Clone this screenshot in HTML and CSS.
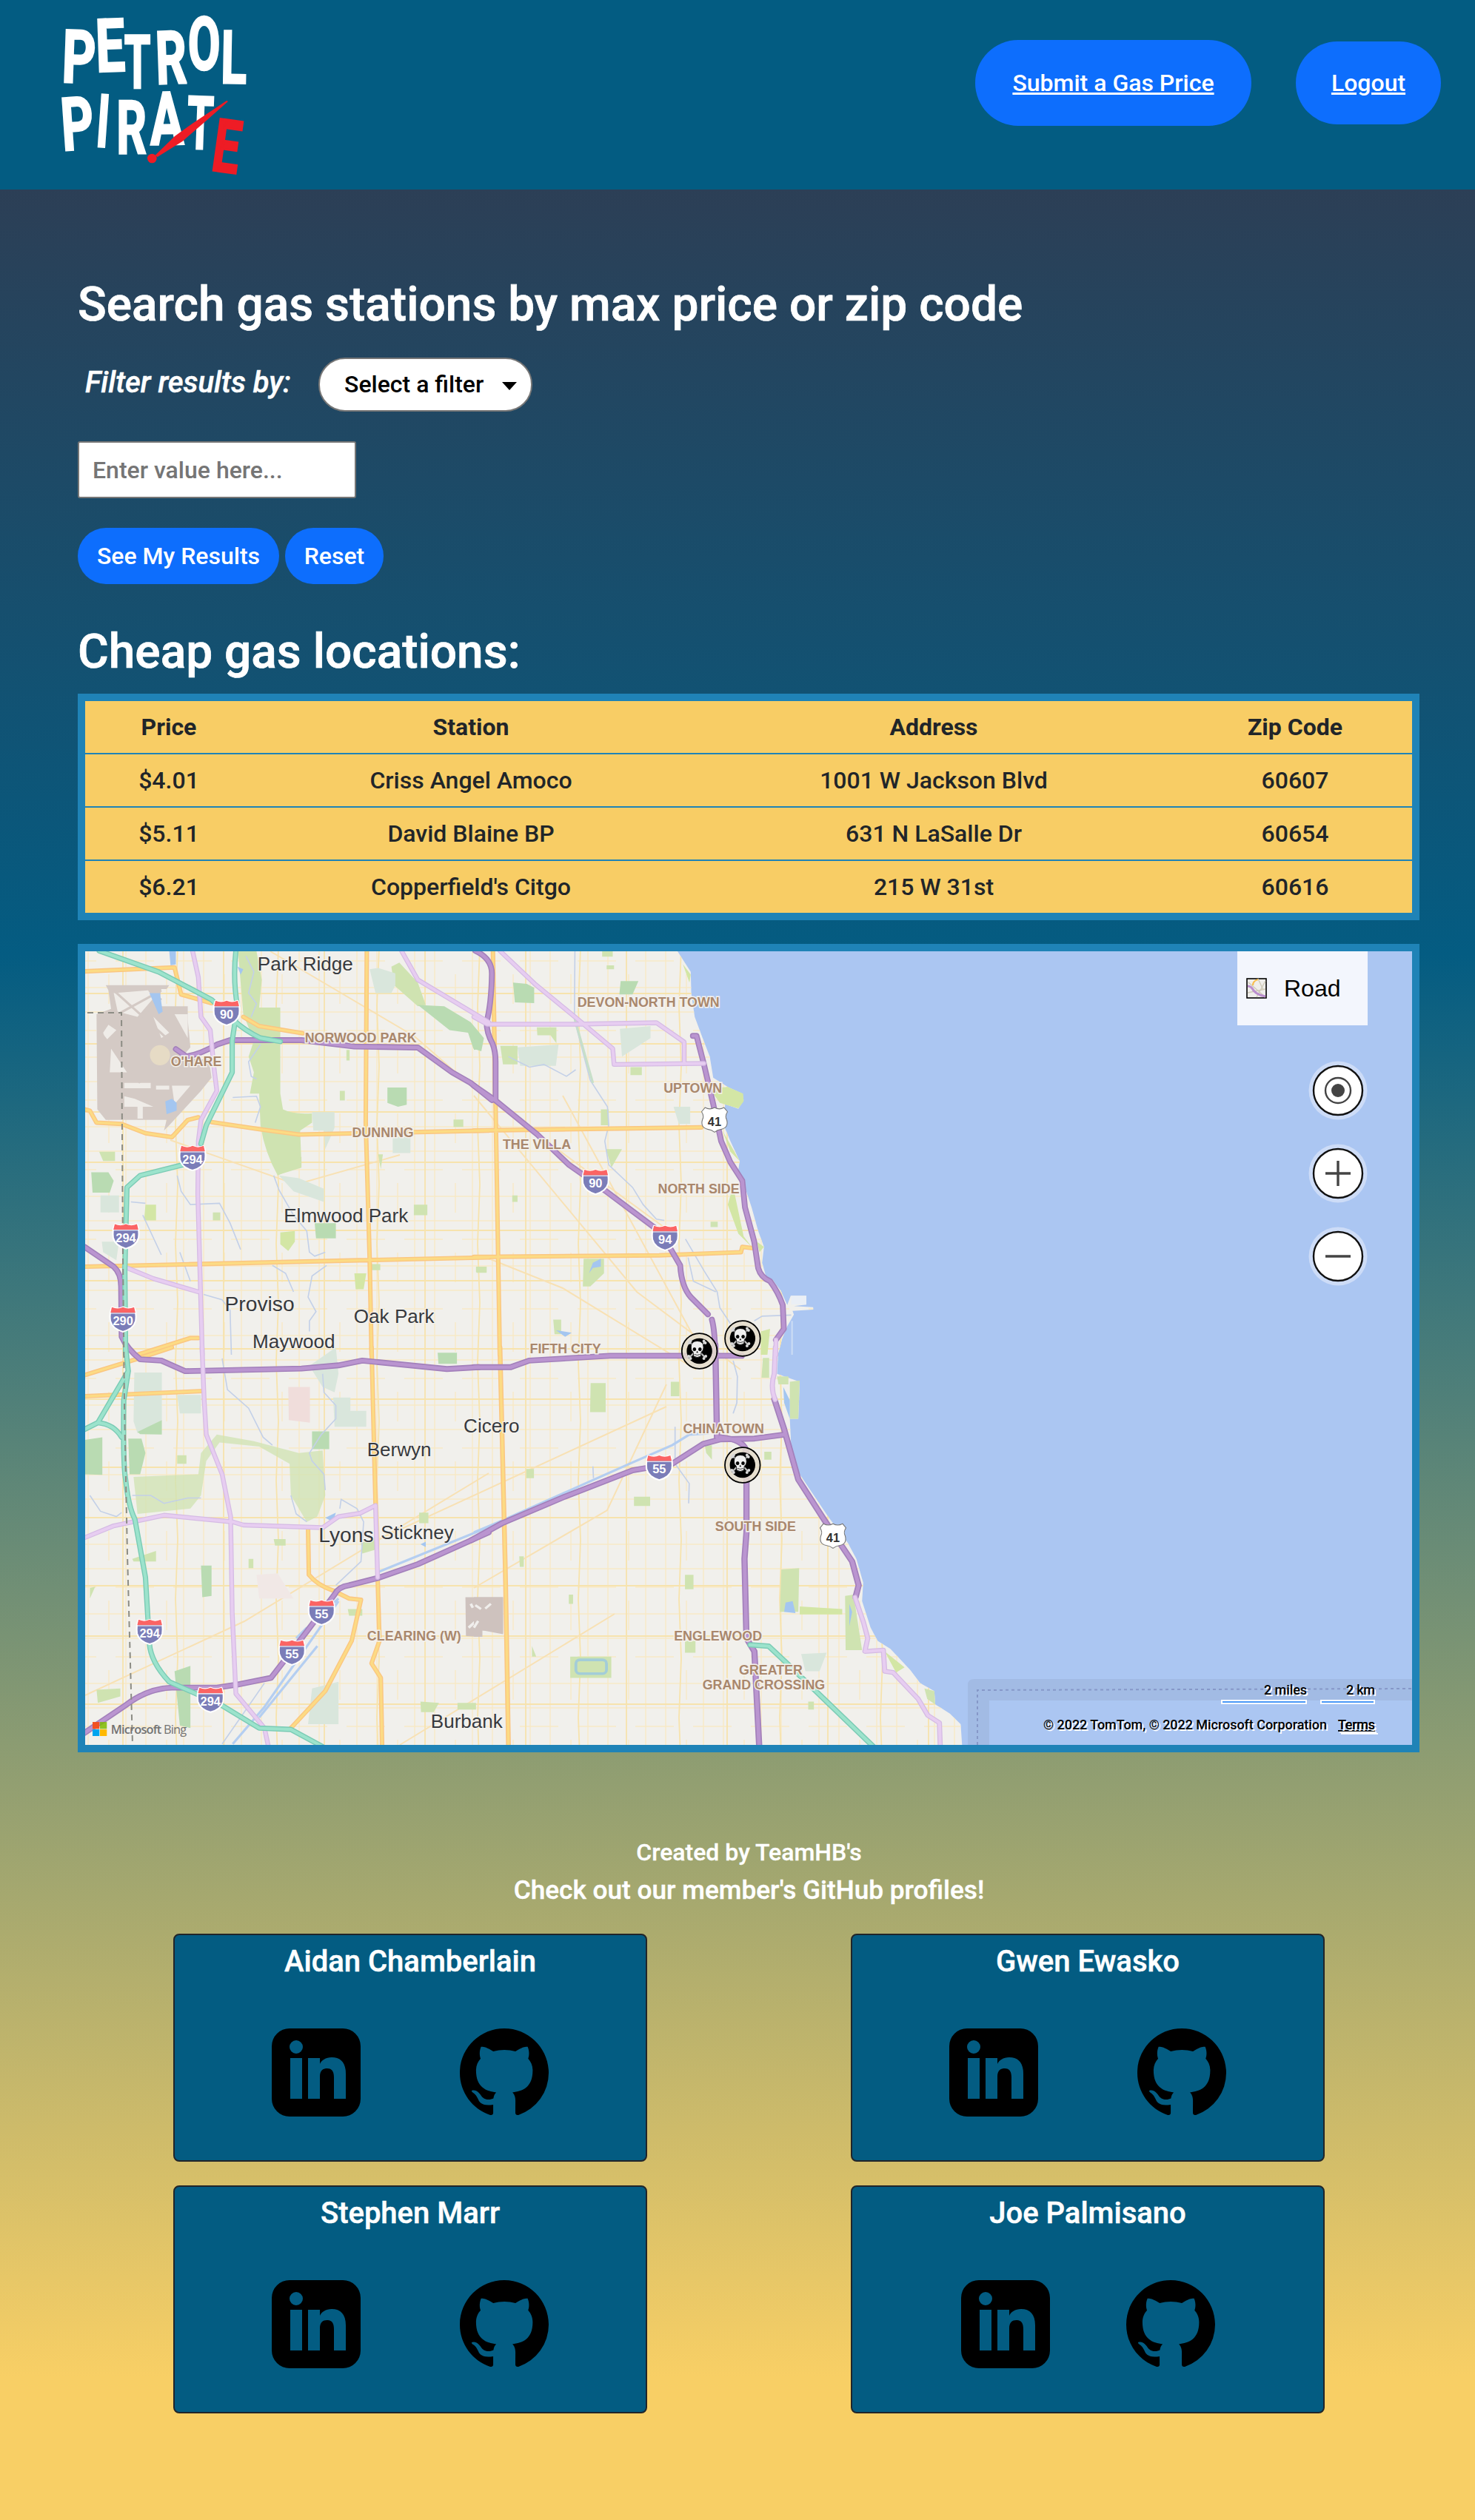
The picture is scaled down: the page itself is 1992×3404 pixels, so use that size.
FILE: index.html
```html
<!DOCTYPE html>
<html lang="en">
<head>
<meta charset="utf-8">
<title>Petrol Pirate</title>
<link rel="stylesheet" href="styles.css">
</head>
<body>
<svg class="sprite" aria-hidden="true">
  <symbol id="linkedin" viewBox="0 0 120 120">
    <path fill-rule="evenodd" d="M24 0H96A24 24 0 0 1 120 24V95A24 24 0 0 1 96 119H24A24 24 0 0 1 0 95V24A24 24 0 0 1 24 0ZM33 16A9 9 0 1 0 33 34A9 9 0 1 0 33 16ZM25 40V95H41V40ZM49 40V95H65V65C65 57 69 54 75 54C82 54 84 59 84 66V95H100V61C100 46 93 39 81 39C73 39 67 43 65 48V40Z"/>
  </symbol>
  <symbol id="github" viewBox="0 0 16 16">
    <path d="M8 0C3.58 0 0 3.58 0 8c0 3.54 2.29 6.53 5.47 7.59.4.07.55-.17.55-.38 0-.19-.01-.82-.01-1.49-2.01.37-2.53-.49-2.69-.94-.09-.23-.48-.94-.82-1.13-.28-.15-.68-.52-.01-.53.63-.01 1.08.58 1.23.82.72 1.21 1.87.87 2.33.66.07-.52.28-.87.51-1.07-1.78-.2-3.64-.89-3.64-3.95 0-.87.31-1.59.82-2.15-.08-.2-.36-1.02.08-2.12 0 0 .67-.21 2.2.82.64-.18 1.32-.27 2-.27.68 0 1.36.09 2 .27 1.53-1.04 2.2-.82 2.2-.82.44 1.1.16 1.92.08 2.12.51.56.82 1.27.82 2.15 0 3.07-1.87 3.75-3.65 3.95.29.25.54.73.54 1.48 0 1.07-.01 1.93-.01 2.2 0 .21.15.46.55.38A8.012 8.012 0 0 0 16 8c0-4.42-3.58-8-8-8z"/>
  </symbol>
</svg>

<header class="site-header">
  <svg class="logo" viewBox="0 0 1050 768" role="img" aria-label="Petrol Pirate">
    <g class="logo-letters">
      <text transform="translate(316 335) rotate(2) scale(.71 1)">P</text>
      <text transform="translate(450 289) rotate(-2) scale(.71 1)">E</text>
      <text transform="translate(557 356) scale(.58 1)">T</text>
      <text transform="translate(697 338) rotate(-2) scale(.66 1)">R</text>
      <text transform="translate(827 281) scale(.64 1)">O</text>
      <text transform="translate(946 337) rotate(1) scale(.65 1)">L</text>
      <text transform="translate(320 606) rotate(-4) scale(.69 1)">P</text>
      <text transform="translate(411 595) rotate(4) scale(.6 1)">I</text>
      <text transform="translate(533 622) scale(.64 1)">R</text>
      <text transform="translate(678 585) rotate(-1) scale(.68 1)">A</text>
      <text transform="translate(808 603) rotate(2) scale(.58 1)">T</text>
      <text class="logo-red" transform="translate(905 697) rotate(8) scale(.66 1)">E</text>
    </g>
    <path class="logo-red" d="M924 411L918 408L780 500L708 552L628 630L638 636L740 572L835 490Z"/>
    <circle class="logo-red" cx="616" cy="642" r="19"/>
  </svg>
  <nav class="site-nav">
    <a class="pill pill-submit" href="#submit">Submit a Gas Price</a>
    <a class="pill pill-logout" href="#logout">Logout</a>
  </nav>
</header>

<main class="content">
  <h1 class="title">Search gas stations by max price or zip code</h1>
  <div class="filter-row">
    <label class="filter-label" for="filter">Filter results by:</label>
    <div class="select-wrap">
      <select class="filter-select" id="filter"><option>Select a filter</option></select>
      <svg class="caret" viewBox="0 0 20 11"><path d="M0 0H20L10 11Z"/></svg>
    </div>
  </div>
  <input class="value-input" type="text" placeholder="Enter value here...">
  <div class="actions">
    <button class="btn btn-results">See My Results</button>
    <button class="btn btn-reset">Reset</button>
  </div>

  <h2 class="title title-table">Cheap gas locations:</h2>
  <table class="prices">
    <colgroup><col class="c-price"><col class="c-station"><col class="c-address"><col class="c-zip"></colgroup>
    <thead><tr><th>Price</th><th>Station</th><th>Address</th><th>Zip Code</th></tr></thead>
    <tbody>
      <tr><td>$4.01</td><td>Criss Angel Amoco</td><td>1001 W Jackson Blvd</td><td>60607</td></tr>
      <tr><td>$5.11</td><td>David Blaine BP</td><td>631 N LaSalle Dr</td><td>60654</td></tr>
      <tr><td>$6.21</td><td>Copperfield's Citgo</td><td>215 W 31st</td><td>60616</td></tr>
    </tbody>
  </table>

  <div class="map">
  <svg class="map-canvas" viewBox="115 1285 1792 1072">
    <defs>
      <pattern id="streets" width="78" height="94" patternUnits="userSpaceOnUse">
        <path d="M14 0V94M41 0V94M69 0V40M0 18H78M0 51H78M0 76H52" fill="none" stroke="#f8e9c6" stroke-width="1.4"/>
      </pattern>
      <pattern id="avenues" width="136" height="160" patternUnits="userSpaceOnUse">
        <path d="M30 0V160M104 0L101 80L104 160M0 62H136M0 130H136" fill="none" stroke="#f7e3ad" stroke-width="1.8"/>
      </pattern>
      <path id="land-north" transform="translate(640 1270) scale(.35714)" d="M-1520 20H760L770 42L820 120L822 200L835 290L865 370L892 440L905 520L960 555L1015 580L1020 605L1000 638L950 620L945 700L970 760L1005 835L1000 870L1020 920L1050 1010L1075 1100L1097 1160L1090 1220L1104 1270L1130 1285L1160 1325L1185 1380L1198 1345H1257V1378L1210 1384L1283 1388V1397L1205 1402L1210 1416L1185 1460L1165 1510L1152 1560H-1520Z"/>
      <path id="land-south" transform="translate(640 1820) scale(.38265 .35714)" d="M-1450 0H1075L1070 100L1150 130L1145 270H1115L1120 380L1150 480L1200 560L1250 640L1320 740L1350 800L1374 890L1370 960L1400 1060L1425 1110L1470 1140L1540 1220L1575 1270L1625 1300L1628 1350L1680 1385L1718 1425L1724 1520H-1450Z"/>
      <g id="freeways">
        <g transform="translate(100 1270) scale(.35714)">
          <path d="M40 1160L150 1235Q178 1260 178 1310L180 1500Q200 1545 250 1585L330 1590L420 1630L860 1620L1000 1608L1090 1590L1410 1622L1530 1615"/>
          <path d="M385 412L425 440Q480 430 540 395L590 378H860L1060 402L1300 406L1430 500L1500 540L1580 605"/>
        </g>
        <g transform="translate(640 1270) scale(.35714)">
          <path d="M0 550L80 605L240 735L360 850L410 885L500 950L680 1085L745 1170L780 1230Q785 1310 820 1350L885 1415M900 1435Q912 1480 912 1568"/>
          <path d="M5 40Q70 70 68 130Q66 240 48 310Q48 350 70 390Q82 420 82 460V605"/>
          <path d="M828 362H842L870 470L905 620L935 760L970 840L1015 910L1025 1010L1060 1140L1075 1240Q1085 1275 1120 1290Q1150 1330 1168 1380L1172 1470L1142 1512"/>
        </g>
        <g transform="translate(640 1820) scale(.38265 .35714)">
          <path d="M0 75H130L195 50L480 32H945M852 -10L858 340"/>
          <path d="M-10 730L100 665L320 565L560 465L700 440L810 365L870 348L990 345L1095 330"/>
          <path d="M870 340Q960 350 962 400V700L955 800L962 1100L990 1150L1007 1510M1060 195L1095 310L1145 500L1235 650L1335 810L1358 900L1347 945"/>
        </g>
        <path transform="translate(100 1820) scale(.35714)" d="M1568 700L1300 820L1150 872L1040 900Q1000 905 985 935L880 1075L745 1250L620 1275L540 1287H370Q280 1290 200 1350L40 1458"/>
      </g>
      <g id="parkways">
        <path transform="translate(100 1270) scale(.35714)" d="M448 40L470 140L480 290L515 340L530 490L540 570L480 680L470 760L468 960L485 1568M190 1235L300 1280L470 1330M1238 40L1300 150L1568 310"/>
        <path transform="translate(640 1270) scale(.35714)" d="M0 290L50 318H380L690 312L795 385V465M98 40L230 165L400 305L525 410L530 470L870 466M1142 1512L1142 1568"/>
        <path transform="translate(100 1820) scale(.35714)" d="M484 0L492 200L500 330L560 480L592 640L598 1000L612 1310L720 1440L735 1510M40 720L150 675L340 635L600 660L640 672L940 682L1000 640L1080 628L1140 598L1148 870"/>
        <path transform="translate(640 1820) scale(.38265 .35714)" d="M1064 0L1060 100Q1045 150 1063 198M1345 945L1375 1040L1390 1100L1380 1150L1445 1145L1450 1225L1480 1230L1568 1330L1602 1392L1643 1420L1646 1510"/>
      </g>
      <g id="arterials">
        <path transform="translate(100 1270) scale(.35714)" d="M40 118L380 103L405 205L520 238M640 290L700 325L865 352M1107 40L1103 690L1118 1210L1125 1568M40 640L60 645L85 690L180 695L270 730L370 745L430 680L470 670M520 688L700 715L850 735L1568 720M40 1235L1110 1210L1568 1200M240 1568L440 1505L470 1505"/>
        <path transform="translate(640 1270) scale(.35714)" d="M0 720L860 708M72 40L98 1568M0 1198L700 1192L1010 1180L1015 1160L1055 1165"/>
        <path transform="translate(100 1820) scale(.35714)" d="M40 105L250 40L370 0M40 185L490 165M1125 0L1140 590M1148 870L1155 1110L1125 1195L1160 1250L1165 1510M885 690L888 860Q920 900 980 920L1040 950L1085 955L1050 1110L950 1300L820 1440"/>
        <path transform="translate(640 1820) scale(.38265 .35714)" d="M92 0L110 800L112 900L122 1510"/>
      </g>
      <g id="tollways">
        <path transform="translate(100 1270) scale(.35714)" d="M95 40L320 120L520 225L600 300Q650 345 705 370L780 383M612 40Q600 150 618 250L598 380V500L500 700L480 770M410 850L250 890L200 935L192 1250L195 1568"/>
        <path transform="translate(100 1820) scale(.35714)" d="M195 0L205 90L188 200Q185 450 195 500Q205 600 230 650L270 870L285 1120Q290 1190 360 1265L450 1305L560 1355L700 1440L820 1445L940 1510M205 90L140 200L90 285L40 310M90 285Q150 290 180 340"/>
        <path transform="translate(640 1820) scale(.38265 .35714)" d="M975 1125L1040 1130L1100 1190L1410 1510"/>
      </g>
      <symbol id="interstate" viewBox="-54 -52 108 104" overflow="visible">
        <path d="M-42 -46Q-20 -36 0 -46Q20 -36 42 -46Q52 -26 48 6Q40 36 0 47Q-40 36 -48 6Q-52 -26 -42 -46Z" fill="#7b7db8" stroke="#fff" stroke-width="6"/>
        <path d="M-42 -46Q-20 -36 0 -46Q20 -36 42 -46L47 -25H-47Z" fill="#fb6464"/>
        <path d="M-48 -23H48" stroke="#fff" stroke-width="3"/>
      </symbol>
      <symbol id="us-route" viewBox="-54 -52 108 104" overflow="visible">
        <path d="M-36 -46Q-18 -36 0 -46Q18 -36 36 -46L49 -30Q38 -14 46 0Q54 30 26 36Q10 38 0 47Q-10 38 -26 36Q-54 30 -46 0Q-38 -14 -49 -30Z" fill="#fff" stroke="#777" stroke-width="3"/>
      </symbol>
      <symbol id="pin" viewBox="-26 -26 52 52">
        <circle r="23.8" fill="#e4dccb" fill-opacity=".85" stroke="#000" stroke-width="1.8"/>
        <circle r="17.2" fill="#000"/>
        <g transform="translate(-3 -2)">
          <path d="M-10 -10L10 10M10 -10L-10 10" stroke="#bbb" stroke-width="2.4" stroke-linecap="round"/>
          <g fill="#d8d8d8"><circle cx="-11" cy="-9" r="1.9"/><circle cx="-9" cy="-11.500" r="1.9"/><circle cx="9" cy="-11.500" r="1.9"/><circle cx="11" cy="-9" r="1.9"/><circle cx="-11.500" cy="9" r="2"/><circle cx="-9" cy="12" r="2"/><circle cx="11.500" cy="9" r="2"/><circle cx="9" cy="12" r="2"/></g>
          <path d="M-8.500 -3Q-8.500 -11.500 0 -11.500Q8.500 -11.500 8.500 -3Q8.500 1.500 5.500 3.500L4.800 9Q0 12 -4.800 9L-5.500 3.500Q-8.500 1.500 -8.500 -3Z" fill="#efefef" stroke="#000" stroke-width=".8"/>
          <ellipse cx="-3.700" cy="-.6" rx="2.300" ry="2.500"/><ellipse cx="3.700" cy="-.6" rx="2.300" ry="2.500"/>
          <path d="M0 1.800L-1.300 4.200H1.300Z"/><path d="M-3.600 6.700Q0 8.400 3.600 6.700" fill="none" stroke="#222" stroke-width=".9"/>
        </g>
      </symbol>
      <clipPath id="land-clip"><use href="#land-north"/><use href="#land-south"/></clipPath>
    </defs>

    <rect class="lake" x="115" y="1285" width="1792" height="1072"/>
    <path d="M1307 2357V2276Q1307 2268 1316 2268H1907V2297H1336V2357Z" fill="#a2bbe4"/>
    <path d="M1320 2357V2283L1907 2281" class="boundary"/>
    <g class="land"><use href="#land-north"/><use href="#land-south"/></g>

    <g class="soft">
    <g clip-path="url(#land-clip)">
      <rect x="115" y="1285" width="1200" height="1072" fill="url(#streets)"/>
      <rect x="115" y="1285" width="1200" height="1072" fill="url(#avenues)"/>
      <path class="lane" d="M365 1285L560 1400L640 1470L900 1660M640 1480L860 1745L1000 1850M760 1480L950 1830M230 1540L400 1600L540 1560M510 2080L900 1900M115 2290L330 2190L660 1990M640 2145L820 2040L900 1870M540 2357L830 2180M660 1700L760 1740L940 1850"/>
    </g>

    <g transform="translate(100 1270) scale(.35714)">
      <path class="park" d="M620 42H690L710 150L700 255H780V580L790 640Q830 660 900 655V690L855 720L860 850L770 890Q720 800 705 700L700 580H665L680 500L660 440L680 380L640 280Z"/>
      <path class="park" d="M1200 100L1230 85L1300 160L1330 245L1300 250L1210 170Z"/>
      <path class="wood" d="M1300 245L1400 250L1500 310L1550 370L1540 420L1510 410L1490 350L1420 340Z"/>
      <path class="wood" d="M1185 557H1258V622L1225 630L1185 615ZM65 878H130L150 910L135 955H70ZM910 1070H990V1128H915Z"/>
      <path class="park" d="M780 840L860 820V860L770 888ZM1285 1000H1336V1040H1285ZM1435 678H1472V706H1435ZM525 1030H553V1060H525ZM1120 1225H1158V1248H1120ZM1520 1235H1560V1256H1520ZM1030 415H1042V455H1030ZM1150 810H1168L1160 865ZM1005 570H1024V606H1005ZM95 800H155V835H110Z"/>
      <path class="green" d="M900 650H985V710L950 790L945 720H905ZM775 890L850 900L945 940V990L830 950ZM1118 110L1150 105L1215 125V170L1200 200H1140ZM1205 745H1272V805H1205ZM100 965H170V1030H100ZM105 1140H170L160 1210L110 1180Z"/>
      <path class="lime" d="M780 1105L835 1100V1140L810 1175L780 1150ZM1060 1260H1105L1095 1320H1065ZM270 1000H310V1060H265Z"/>
      <path class="airport" d="M120 170H360L350 185H330L320 250H430V300L440 405L410 440L470 450H510L520 520L480 570L360 700L340 720L350 680H120L88 640L85 280L140 260L130 190Z"/>
      <path class="apron" d="M150 200L280 190L300 220L240 290L165 270ZM140 410L200 500H135ZM110 350L130 320L160 340L120 380ZM190 540H290V560H190ZM310 550H360V565H310ZM190 590L230 600L300 630H260V675H240V630H190ZM370 550H440L380 620ZM300 290L360 350L330 370ZM380 280H430V370Z"/>
      <path class="runway" d="M150 190L350 370M175 275L330 190M100 350L250 540M190 350L330 220"/>
      <circle cx="325" cy="435" r="38" fill="#e6dbc5"/>
      <path class="pond" d="M285 200H325L335 270L320 280ZM345 610L370 600L388 615V645L350 658ZM360 42H385V92L365 95ZM618 100L640 110L630 130Z"/>
      <path class="river" d="M650 60L680 120L660 200L690 240L670 290M705 395L660 460L670 515L690 525M600 595L690 590L705 630L685 690M755 890L775 945L830 1040L880 1100L890 1180L910 1195L950 1180M955 1230L900 1270L885 1350L915 1405L890 1440V1480M390 890L405 950L440 1000L550 995L590 1070L630 1170M260 1040L330 1190M215 990L270 995M750 1230L800 1260L830 1330M400 1180L440 1290M490 1340L560 1360L590 1400L595 1568"/>
    </g>
    <g transform="translate(640 1270) scale(.35714)">
      <path class="wood" d="M148 160L200 165L228 180V238L155 235ZM555 155H622L600 205H550ZM0 340L25 380V410L0 415Z"/>
      <path class="park" d="M238 330H312V390L290 360H240ZM100 400H165V470H110ZM415 1205H492V1260L440 1310H412ZM485 42H525V62H485ZM502 95H530V110H502ZM592 480H635V510H592ZM895 1065H922V1085H895ZM10 1235H48V1258H10ZM300 1435H330V1490H305ZM480 640H510V700H480ZM500 790H560L520 860ZM145 965H165V990H145Z"/>
      <path class="green" d="M165 405L320 395L310 475H175ZM552 335L668 325V370L560 440ZM755 630H818V695H775Z"/>
      <path class="lime" d="M890 560L960 555L1018 580L1020 610L1000 636L930 615ZM940 720L1005 835L970 800ZM790 90L820 130L815 160ZM980 930L1020 1120L1050 1160L1000 1110L960 1000ZM1070 1140L1097 1160L1080 1180ZM1085 1480L1120 1470L1110 1568H1085Z"/>
      <path class="river" d="M382 42L380 300L440 530L505 630L510 700L495 760L510 850L600 935L640 1000L690 1055L720 1060M130 440L210 480L265 470L350 515L385 490M800 1130L870 1250L920 1330L930 1390L970 1450M810 1200L830 1290L915 1330M1060 1440L1090 1422L1200 1418"/>
      <path class="canal greenway" d="M382 300L430 470L450 540"/>
      <path class="pond" d="M435 1260L450 1220L480 1205V1235L450 1240ZM310 1475L370 1485L345 1500Z"/>
      <path d="M1200 1345H1257V1378H1200Z" fill="#eaeff6"/>
      <path d="M1203 1440V1568" stroke="#cbdcf4" stroke-width="6"/>
    </g>
    <g transform="translate(100 1820) scale(.35714)">
      <path class="green" d="M228 95H332V275L240 325L225 280ZM890 70L990 0L1000 100L985 170L940 150ZM390 180H480V250H400ZM980 190H1045V240H1105V300H985ZM900 1290L1000 1265V1425H885Z"/>
      <path class="wood" d="M240 320L332 275V330L250 328ZM40 350L107 340V482L42 480ZM205 345H255L270 400L250 480H210ZM900 318H965V385H900ZM1375 20H1448V62H1378ZM480 825H520V940L485 945ZM380 1225L440 1205V1440L400 1430Z"/>
      <path class="park" d="M225 490L470 480L480 400L540 330L680 355L850 400L940 390L950 560L920 640L880 660L820 560L815 440L700 375L550 360L500 430L480 560L440 610L240 630Z" opacity=".75"/>
      <path class="park" d="M85 1295L175 1290V1320L90 1345ZM755 725H800V750H760ZM1310 1340L1380 1345L1360 1380H1312ZM1450 1345H1520V1370H1450ZM220 800L310 770V810H225ZM1305 625H1340V665H1305ZM1085 740L1140 720V765L1090 780ZM390 408H425V440H390ZM660 800H678V835H660ZM60 910L80 905L60 950ZM1035 990H1090V1015H1040Z"/>
      <path d="M810 150H892V285L812 275Z" fill="#f0dddb"/>
      <path d="M690 860L770 855L830 950H700Z" fill="#f1e8e6"/>
      <path d="M1480 945H1622V1080L1570 1070L1530 1072V1095L1482 1092Z" fill="#cec2be"/>
      <path d="M1492 1060L1528 1028M1500 970L1508 985M1535 960L1542 985M1568 995L1585 975M1520 1062L1545 1020" stroke="#f0eeec" stroke-width="10"/>
      <path class="river" d="M940 100L945 170L990 220V270L935 330L890 400L900 430L945 480L950 540M560 42L580 160L660 230L715 340L750 370M220 560L290 560L340 590L430 570L480 570M1005 610L1010 575L1070 610L1095 660L1085 810L990 900M60 560L100 620L160 640L180 625M820 560L840 630L880 660M720 1270L560 1500"/>
      <path class="canal" d="M1568 680L1150 850M880 1060L840 1100L1000 950M1000 960L720 1360L600 1500M920 1130L700 1400"/>
      <path class="pond" d="M950 645L990 625L980 660ZM1310 745L1330 735V755Z"/>
    </g>
    <g transform="translate(640 1820) scale(.38265 .35714)">
      <path d="M0 945H103V1085L30 1070V1095H0Z" fill="#cec2be"/>
      <path d="M5 975L25 990M40 988L60 970M0 1060L15 1035" stroke="#f0eeec" stroke-width="9"/>
      <path class="park" d="M412 135H465V245H410ZM695 130H725V185H695ZM565 565H622V600H565ZM1085 840L1148 835L1145 1000H1080ZM340 1170H485V1250H340ZM745 860H775V915H745ZM1310 940L1340 935L1370 1145H1312ZM185 460H212V495H185ZM1115 130L1150 125L1145 270H1115ZM1070 110H1110V140H1075ZM745 1110H782V1155H745ZM815 370H840V425L820 400ZM1025 395H1050V425H1025ZM335 935H350V970H335ZM205 1130L220 1170H205ZM160 790H176V830H162ZM1180 1340H1200V1370H1180ZM1590 1290L1625 1300L1628 1350L1600 1330ZM1020 40H1042V115H1015Z"/>
      <path class="green" d="M1155 1160L1245 1155L1220 1225H1170Z"/>
      <path class="lime" d="M1150 980L1300 990V1010H1150ZM1450 1150L1520 1210L1490 1230Z"/>
      <path class="pond" d="M1100 965L1125 960L1135 1005L1095 1000ZM1325 970L1335 1000L1325 1055ZM1092 150L1115 200V270L1095 210Z"/>
      <rect x="360" y="1182" width="108" height="52" rx="14" fill="none" stroke="#a3cdd8" stroke-width="10"/>
      <path class="river" d="M915 50L930 110L928 210L915 250M710 440L760 515L758 590M420 450L422 495M710 430V300"/>
      <path class="canal" d="M0 700L100 655L550 440L700 370L760 330L830 325"/>
    </g>

    <use href="#arterials" class="art-case"/><use href="#arterials" class="art-fill"/>
    <use href="#freeways" class="fwy-case"/><use href="#freeways" class="fwy-fill"/>
    <use href="#parkways" class="pkwy-case"/><use href="#parkways" class="pkwy-fill"/>
    <use href="#tollways" class="toll-case"/><use href="#tollways" class="toll-fill"/>
    <path class="county" d="M118 1368H164L166 1700L168 1900L172 2100L179 2357"/>
    </g>

    <g class="town" transform="translate(100 1270) scale(.35714)">
      <text x="694" y="114">Park Ridge</text><text x="793" y="1067">Elmwood Park</text>
      <text x="570" y="1402" class="town-lg">Proviso</text><text x="1058" y="1447">Oak Park</text>
      <text x="675" y="1543">Maywood</text><text x="1473" y="1862">Cicero</text>
      <text x="1108" y="1951">Berwyn</text><text x="925" y="2276" class="town-lg">Lyons</text>
      <text x="1160" y="2265">Stickney</text><text x="1349" y="2980">Burbank</text>
    </g>
    <g class="hood" transform="translate(100 1270) scale(.35714)">
      <text x="1084" y="386">NORWOOD PARK</text><text x="462" y="476">O'HARE</text><text x="1168" y="745">DUNNING</text>
      <text x="2172" y="251">DEVON-NORTH TOWN</text><text x="2340" y="577">UPTOWN</text><text x="1750" y="790">THE VILLA</text>
      <text x="2362" y="958">NORTH SIDE</text><text x="1858" y="1562">FIFTH CITY</text><text x="1286" y="2648">CLEARING (W)</text>
      <text x="2456" y="1864">CHINATOWN</text><text x="2577" y="2234">SOUTH SIDE</text><text x="2435" y="2648">ENGLEWOOD</text>
      <text x="2635" y="2777">GREATER</text><text x="2608" y="2834">GRAND CROSSING</text>
    </g>
    <g class="shields" transform="translate(100 1270) scale(.35714)">
      <g transform="translate(577 275)"><use href="#interstate" x="-54" y="-52" width="108" height="104"/><text y="22">90</text></g>
      <g transform="translate(448 824)"><use href="#interstate" x="-54" y="-52" width="108" height="104"/><text y="22">294</text></g>
      <g transform="translate(196 1120)"><use href="#interstate" x="-54" y="-52" width="108" height="104"/><text y="22">294</text></g>
      <g transform="translate(185 1434)"><use href="#interstate" x="-54" y="-52" width="108" height="104"/><text y="22">290</text></g>
      <g transform="translate(1972 914)"><use href="#interstate" x="-54" y="-52" width="108" height="104"/><text y="22">90</text></g>
      <g transform="translate(2235 1126)"><use href="#interstate" x="-54" y="-52" width="108" height="104"/><text y="22">94</text></g>
      <g transform="translate(2213 1995)"><use href="#interstate" x="-54" y="-52" width="108" height="104"/><text y="22">55</text></g>
      <g transform="translate(936 2543)"><use href="#interstate" x="-54" y="-52" width="108" height="104"/><text y="22">55</text></g>
      <g transform="translate(824 2694)"><use href="#interstate" x="-54" y="-52" width="108" height="104"/><text y="22">55</text></g>
      <g transform="translate(286 2616)"><use href="#interstate" x="-54" y="-52" width="108" height="104"/><text y="22">294</text></g>
      <g transform="translate(516 2873)"><use href="#interstate" x="-54" y="-52" width="108" height="104"/><text y="22">294</text></g>
      <g class="dark" transform="translate(2422 679)"><use href="#us-route" x="-54" y="-52" width="108" height="104"/><text y="23">41</text></g>
      <g class="dark" transform="translate(2870 2253)"><use href="#us-route" x="-54" y="-52" width="108" height="104"/><text y="23">41</text></g>
    </g>
    <use href="#pin" x="918.6" y="1799" width="52" height="52"/>
    <use href="#pin" x="976.9" y="1782" width="52" height="52"/>
    <use href="#pin" x="976.8" y="1953" width="52" height="52"/>

    <rect x="1671" y="1285" width="176" height="100" fill="#f3f6fd"/>
    <rect x="1684" y="1322" width="26" height="26" fill="#efeeeb" stroke="#000" stroke-width="1.6"/>
    <path d="M1686 1327L1709 1347M1699 1322L1706 1337M1709 1325L1697 1347M1685 1341L1709 1336" stroke="#cfcab8" stroke-width="1.4"/>
    <path d="M1685 1332Q1690 1332 1693 1338Q1698 1344 1709 1346" fill="none" stroke="#bb8fce" stroke-width="3.2"/>
    <path d="M1692 1331Q1692 1325 1699 1323" fill="none" stroke="#f9bd4b" stroke-width="2.2"/>
    <text class="road-label" x="1734" y="1345.7">Road</text>
    <g class="control"><circle class="halo" cx="1807" cy="1473" r="39.5"/><circle class="face" cx="1807" cy="1473" r="33"/><circle cx="1807" cy="1473" r="17"/><circle class="dot" cx="1807" cy="1473" r="9"/></g>
    <g class="control"><circle class="halo" cx="1807" cy="1585" r="39.5"/><circle class="face" cx="1807" cy="1585" r="33"/><path d="M1790 1585H1824M1807 1568V1602"/></g>
    <g class="control"><circle class="halo" cx="1807" cy="1697" r="39.5"/><circle class="face" cx="1807" cy="1697" r="33"/><path d="M1790 1697H1824"/></g>

    <rect x="1649" y="2296" width="116" height="6" fill="#fff"/><rect x="1651" y="2298" width="112" height="2" fill="#4a98f7"/>
    <rect x="1783" y="2296" width="74" height="6" fill="#fff"/><rect x="1785" y="2298" width="70" height="2" fill="#4a98f7"/>
    <g class="credit">
      <text x="1765" y="2289" textLength="58">2 miles</text><text x="1857" y="2289" textLength="39">2 km</text>
      <text x="1792" y="2336" textLength="383">© 2022 TomTom, © 2022 Microsoft Corporation</text>
      <text x="1857" y="2336" textLength="50" text-decoration="underline">Terms</text>
    </g>
    <g transform="translate(100 1820) scale(.35714)">
      <path fill="#f25022" d="M70 1417H96V1443H70Z"/><path fill="#7fba00" opacity=".85" d="M98 1417H124V1443H98Z"/>
      <path fill="#00a4ef" d="M70 1445H96V1470H70Z"/><path fill="#ffb900" d="M98 1445H124V1470H98Z"/>
      <text class="bing" x="139" y="1461" textLength="287"><tspan font-weight="600">Microsoft</tspan> Bing</text>
    </g>
  </svg>
  </div>
</main>

<footer class="site-footer">
  <p class="credit-line">Created by TeamHB's</p>
  <p class="profiles-line">Check out our member's GitHub profiles!</p>
  <div class="members">
    <section class="member"><h3 class="member-name">Aidan Chamberlain</h3><div class="member-links"><svg><use href="#linkedin"/></svg><svg><use href="#github"/></svg></div></section>
    <section class="member"><h3 class="member-name">Gwen Ewasko</h3><div class="member-links"><svg><use href="#linkedin"/></svg><svg><use href="#github"/></svg></div></section>
    <section class="member"><h3 class="member-name">Stephen Marr</h3><div class="member-links"><svg><use href="#linkedin"/></svg><svg><use href="#github"/></svg></div></section>
    <section class="member"><h3 class="member-name">Joe Palmisano</h3><div class="member-links member-links-tight"><svg><use href="#linkedin"/></svg><svg><use href="#github"/></svg></div></section>
  </div>
</footer>
</body>
</html>
```
FILE: styles.css
```css
* { box-sizing: border-box; }
body {
  margin: 0;
  height: 3404px;
  font: 500 32px/48px Roboto, sans-serif;
  color: #fff;
  background: linear-gradient(#2c3f56 256px, #045c82 1290px, #f8cf65 3210px);
}
h1, h2, h3, p { margin: 0; font-weight: 500; }
.sprite { display: none; }

.site-header {
  height: 256px;
  background: #035c82;
  display: flex;
  justify-content: space-between;
}
.logo { width: 350px; height: 256px; overflow: visible; }
.logo-letters { fill: #fff; stroke: #fff; stroke-width: 8px; font: 700 298px Roboto, sans-serif; text-anchor: middle; }
.logo-red { fill: #ee1c25; }
.logo-letters .logo-red { stroke: #ee1c25; }
.site-nav { display: flex; align-items: center; gap: 60px; height: 224px; padding-right: 46px; }
.pill {
  display: flex;
  align-items: center;
  justify-content: center;
  border-radius: 60px;
  background: #0d6efd;
  color: #fff;
}
.pill-submit { width: 373px; height: 116px; }
.pill-logout { width: 196px; height: 112px; }

.content { padding: 117px 75px 0 105px; }
.title { font-size: 64px; line-height: 77px; -webkit-text-stroke: .7px #fff; }
.filter-row { display: flex; align-items: flex-start; margin-top: 33px; }
.filter-label { width: 325px; padding: 10px 0 0 10px; font-size: 40px; font-style: italic; -webkit-text-stroke: .5px #fff; }
.select-wrap { position: relative; width: 289px; height: 73px; }
.filter-select {
  appearance: none;
  width: 289px;
  height: 73px;
  padding: 0 0 2px 33px;
  border: 2px solid #767676;
  border-radius: 36px;
  background: #fff;
  color: #000;
  font: inherit;
}
.caret { position: absolute; left: 248px; top: 33px; width: 20px; height: 11px; }
.value-input {
  display: block;
  width: 376px;
  height: 77px;
  margin-top: 40px;
  padding: 0 18px;
  border: 2px solid #767676;
  border-radius: 3px;
  background: #fff;
  font: inherit;
}
.value-input::placeholder { color: #757575; }
.actions { display: flex; gap: 8px; margin-top: 40px; }
.btn {
  height: 76px;
  padding: 0;
  border: 0;
  border-radius: 38px;
  background: #0d6efd;
  color: #fff;
  font: inherit;
}
.btn-results { width: 272px; }
.btn-reset { width: 133px; }
.title-table { margin-top: 53px; }

.prices {
  width: 1812px;
  margin-top: 18px;
  border: 10px solid #1f83b7;
  border-spacing: 0;
  table-layout: fixed;
  background: #f8cd65;
  color: #212529;
  text-align: center;
}
.c-price { width: 226px; }
.c-station { width: 590px; }
.c-address { width: 660px; }
.c-zip { width: 316px; }
.prices th, .prices td { padding: 0; height: 72px; border-bottom: 2px solid #1f83b7; }
.prices th { font-weight: 700; }
.prices tbody tr:last-child td { height: 70px; border-bottom: 0; }

.map { width: 1812px; height: 1092px; margin-top: 32px; border: 10px solid #1f83b7; }
.map-canvas { display: block; width: 1792px; height: 1072px; }
.map-canvas use { stroke-linecap: round; stroke-linejoin: round; }
.lake { fill: #abc6f2; }
.land { fill: #f1f0ec; }
.soft { filter: blur(.5px); }
.lane { fill: none; stroke: #f8e1b4; stroke-width: 2; }
.park { fill: #cfe3b1; }
.wood { fill: #b9dbb2; }
.green { fill: #d9e6dc; }
.lime { fill: #d3e6a5; }
.airport { fill: #d4cac5; }
.apron { fill: #efece8; }
.runway { fill: none; stroke: #d4cac5; stroke-width: 9; }
.pond { fill: #a4c6f0; }
.river { fill: none; stroke: #c3d0e8; stroke-width: 4.5; }
.canal { fill: none; stroke: #b4cef1; stroke-width: 9; }
.greenway { stroke: #c7dfc9; }
.boundary { fill: none; stroke: #8698c8; stroke-width: 2; stroke-dasharray: 4 4; }
.county { fill: none; stroke: #8c8c84; stroke-width: 2; stroke-dasharray: 8 6; }
.art-case { fill: none; stroke: #fbc681; stroke-width: 17px; }
.art-fill { fill: none; stroke: #fcdb84; stroke-width: 9px; }
.fwy-case { fill: none; stroke: #a380bb; stroke-width: 22px; }
.fwy-fill { fill: none; stroke: #ba95d0; stroke-width: 13px; }
.pkwy-case { fill: none; stroke: #d5bbe4; stroke-width: 18px; }
.pkwy-fill { fill: none; stroke: #e7cdf1; stroke-width: 11px; }
.toll-case { fill: none; stroke: #7bcbb5; stroke-width: 20px; }
.toll-fill { fill: none; stroke: #9ce3cc; stroke-width: 12px; }
.town { font: 400 73px "Liberation Sans", Arial, sans-serif; fill: #37393d; stroke: #f4f3ef; stroke-width: 6px; paint-order: stroke; }
.town-lg { font-size: 79px; }
.hood { font: 700 50px "Liberation Sans", Arial, sans-serif; fill: #a9876c; stroke: #f4f1ec; stroke-width: 8px; paint-order: stroke; text-anchor: middle; }
.shields { font: 700 46px "Liberation Sans", Arial, sans-serif; fill: #fff; text-anchor: middle; }
.dark text { fill: #333; }
.road-label { font: 400 32px "Liberation Sans", Arial, sans-serif; fill: #000; }
.control { fill: none; stroke: #444; stroke-width: 3.4px; }
.control circle { stroke-width: 2.4px; }
.control .halo { fill: #cddcf7; stroke: none; }
.control .face { fill: #fff; stroke: #111; }
.control .dot { fill: #444; stroke: none; }
.credit { font: 500 18px Roboto, sans-serif; fill: #000; text-anchor: end; text-shadow: 2px 2px 0 #fff; }
.bing { font: 400 46px "Open Sans", sans-serif; fill: #737373; }

.site-footer { padding: 111px 203px 0 234px; text-align: center; }
.credit-line { line-height: 48px; -webkit-text-stroke: .3px #fff; }
.profiles-line { font-size: 35.2px; line-height: 54px; -webkit-text-stroke: .4px #fff; }
.members { display: grid; grid-template-columns: 640px 640px; justify-content: space-between; row-gap: 32px; margin-top: 32px; }
.member { height: 308px; padding-top: 12px; border: 2px solid #212529; border-radius: 8px; background: #035c82; }
.member-name { font-size: 40px; line-height: 48px; -webkit-text-stroke: .5px #fff; }
.member-links { display: flex; justify-content: center; gap: 134px; margin-top: 66px; }
.member-links-tight { gap: 103px; }
.member-links svg { width: 120px; height: 120px; fill: #000; }
```
